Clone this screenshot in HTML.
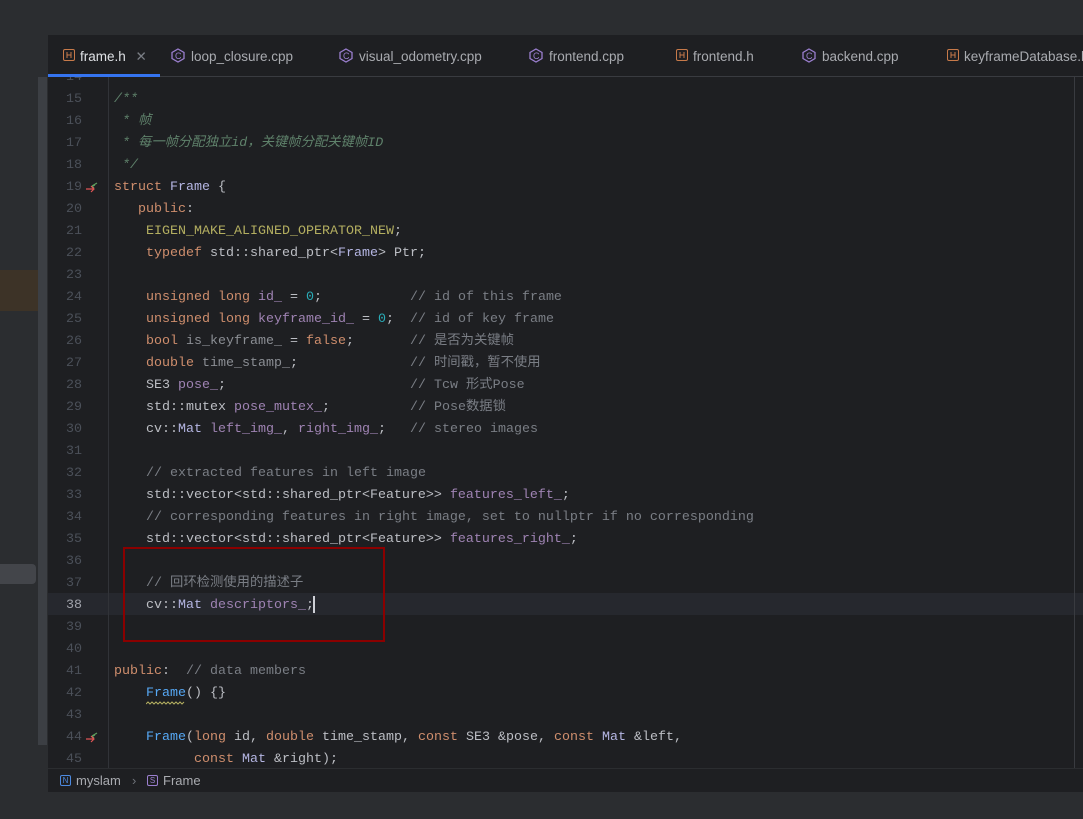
<!DOCTYPE html>
<html><head><meta charset="utf-8"><style>
*{margin:0;padding:0;box-sizing:border-box}
body{width:1083px;height:819px;overflow:hidden;background:#1e1f22;position:relative;font-family:"Liberation Sans","Noto Sans CJK SC",sans-serif}
.top{position:absolute;left:0;top:0;width:1083px;height:35px;background:#2b2d30}
.left{position:absolute;left:0;top:35px;width:48px;height:757px;background:#2b2d30}
.sb{position:absolute;left:38px;top:77px;width:9px;height:668px;background:#3c3f44}
.tabs{position:absolute;left:48px;top:35px;width:1035px;height:42px;background:#1e1f22;border-bottom:1px solid #393b40}
.tab{position:absolute;top:1px;height:42px;line-height:42px;font-size:13.5px;color:#a9abb0;white-space:nowrap}
.tab.act{color:#dfe1e5}
.ic{display:inline-block;vertical-align:middle;margin-right:5px;position:relative;top:-2px}
.code{position:absolute;left:48px;top:77px;width:1035px;height:691px;overflow:hidden}
.ln{position:absolute;left:0;width:34px;text-align:right;font-family:"Liberation Mono",monospace;font-size:13.33px;color:#4b5059}
.l{position:absolute;left:66px;font-family:"Liberation Mono","Noto Sans CJK SC",monospace;font-size:13.33px;color:#bcbec4;white-space:pre;height:22px;line-height:22px}
.ln{height:22px;line-height:22px}
.k{color:#cf8e6d}.c{color:#7a7e85}.d{color:#5f826b;font-style:italic}.m{color:#b3ae60}.f{color:#9f83b3}.u{color:#8b8e94}.n{color:#2aacb8}.fn{color:#56a8f5}.t{color:#bcbec4}.cl{color:#b5b6e3}
.bc{position:absolute;left:48px;top:768px;width:1035px;height:24px;background:#1e1f22;border-top:1px solid #2b2d30;font-size:13px;color:#a9abb0;line-height:24px}
.bot{position:absolute;left:0;top:792px;width:1083px;height:27px;background:#2b2d30}
</style></head><body>
<div class="top"></div>
<div class="left">
 <div style="position:absolute;left:0;top:235px;width:38px;height:41px;background:#3d3327"></div>
 <div style="position:absolute;left:0;top:529px;width:36px;height:20px;background:#43454a;border-radius:0 4px 4px 0"></div>
</div>
<div class="sb"></div>
<div class="tabs">
 <div style="position:absolute;left:0;bottom:-1px;width:112px;height:3px;background:#3574f0"></div>
 <div class="tab act" style="left:15px"><svg class="ic" width="12" height="12"><rect x=".5" y=".5" width="11" height="11" rx="1.5" fill="none" stroke="#c77a4a"/><path d="M4 3v6M8 3v6M4 6h4" stroke="#c77a4a"/></svg>frame.h <span style="color:#7a7e85;margin-left:6px">✕</span></div>
 <div class="tab" style="left:123px"><svg class="ic" width="15" height="15"><path d="M7 1l6 3.5v6L7 14 1 10.5v-6z" fill="none" stroke="#9b7fcf" stroke-width="1.3"/><text x="4" y="11" font-size="9" fill="#9b7fcf" font-family="Liberation Sans">C</text></svg>loop_closure.cpp</div>
 <div class="tab" style="left:291px"><svg class="ic" width="15" height="15"><path d="M7 1l6 3.5v6L7 14 1 10.5v-6z" fill="none" stroke="#9b7fcf" stroke-width="1.3"/><text x="4" y="11" font-size="9" fill="#9b7fcf" font-family="Liberation Sans">C</text></svg>visual_odometry.cpp</div>
 <div class="tab" style="left:481px"><svg class="ic" width="15" height="15"><path d="M7 1l6 3.5v6L7 14 1 10.5v-6z" fill="none" stroke="#9b7fcf" stroke-width="1.3"/><text x="4" y="11" font-size="9" fill="#9b7fcf" font-family="Liberation Sans">C</text></svg>frontend.cpp</div>
 <div class="tab" style="left:628px"><svg class="ic" width="12" height="12"><rect x=".5" y=".5" width="11" height="11" rx="1.5" fill="none" stroke="#c77a4a"/><path d="M4 3v6M8 3v6M4 6h4" stroke="#c77a4a"/></svg>frontend.h</div>
 <div class="tab" style="left:754px"><svg class="ic" width="15" height="15"><path d="M7 1l6 3.5v6L7 14 1 10.5v-6z" fill="none" stroke="#9b7fcf" stroke-width="1.3"/><text x="4" y="11" font-size="9" fill="#9b7fcf" font-family="Liberation Sans">C</text></svg>backend.cpp</div>
 <div class="tab" style="left:899px"><svg class="ic" width="12" height="12"><rect x=".5" y=".5" width="11" height="11" rx="1.5" fill="none" stroke="#c77a4a"/><path d="M4 3v6M8 3v6M4 6h4" stroke="#c77a4a"/></svg>keyframeDatabase.h</div>
</div>
<div class="code">
 <div style="position:absolute;left:0;top:516px;width:1035px;height:22px;background:#26282e"></div>
 <div style="position:absolute;left:60px;top:0;width:1px;height:691px;background:#313338"></div>
 <div style="position:absolute;left:1026px;top:0;width:1px;height:691px;background:#393b40"></div>
 <div style="position:absolute;left:75px;top:470px;width:262px;height:95px;border:2px solid #8b0000"></div>
 <div style="position:absolute;left:265px;top:519px;width:2px;height:17px;background:#ced0d6"></div>
 <svg style="position:absolute;left:37px;top:104px" width="14" height="12"><path d="M12 2L7 5M7 5l3-1M7 5l2 2" stroke="#5fa05f" fill="none" stroke-width="1.2"/><path d="M1 8h8M6 5l3 3-3 3" stroke="#e05555" fill="none" stroke-width="1.2"/></svg>
 <svg style="position:absolute;left:37px;top:654px" width="14" height="12"><path d="M12 2L7 5M7 5l3-1M7 5l2 2" stroke="#5fa05f" fill="none" stroke-width="1.2"/><path d="M1 8h8M6 5l3 3-3 3" stroke="#e05555" fill="none" stroke-width="1.2"/></svg>
 <svg style="position:absolute;left:98px;top:624px" width="40" height="4"><path d="M0 3l2-2 2 2 2-2 2 2 2-2 2 2 2-2 2 2 2-2 2 2 2-2 2 2 2-2 2 2 2-2 2 2 2-2 2 2 2-2" stroke="#b3ae60" fill="none" stroke-width="1"/></svg>
 <div id="c"></div>
</div>
<div class="bc"><span style="position:absolute;left:12px;top:6px;width:11px;height:11px;border:1px solid #4d8ae0;border-radius:2px;font-size:8px;line-height:9px;text-align:center;color:#4d8ae0">N</span><span style="position:absolute;left:28px">myslam</span><span style="position:absolute;left:84px;color:#6f737a">›</span><span style="position:absolute;left:99px;top:6px;width:11px;height:11px;border:1px solid #9b7fcf;border-radius:2px;font-size:8px;line-height:9px;text-align:center;color:#9b7fcf">S</span><span style="position:absolute;left:115px">Frame</span></div>
<div class="bot"></div>
<script>
var L=[
[14,''],
[15,'<span class="d">/**</span>'],
[16,'<span class="d"> * 帧</span>'],
[17,'<span class="d"> * 每一帧分配独立id，关键帧分配关键帧ID</span>'],
[18,'<span class="d"> */</span>'],
[19,'<span class="k">struct</span> <span class="cl">Frame</span> {'],
[20,'   <span class="k">public</span>:'],
[21,'    <span class="m">EIGEN_MAKE_ALIGNED_OPERATOR_NEW</span>;'],
[22,'    <span class="k">typedef</span> std::shared_ptr&lt;<span class="cl">Frame</span>&gt; Ptr;'],
[23,''],
[24,'    <span class="k">unsigned long</span> <span class="f">id_</span> = <span class="n">0</span>;           <span class="c">// id of this frame</span>'],
[25,'    <span class="k">unsigned long</span> <span class="f">keyframe_id_</span> = <span class="n">0</span>;  <span class="c">// id of key frame</span>'],
[26,'    <span class="k">bool</span> <span class="u">is_keyframe_</span> = <span class="k">false</span>;       <span class="c">// 是否为关键帧</span>'],
[27,'    <span class="k">double</span> <span class="u">time_stamp_</span>;              <span class="c">// 时间戳，暂不使用</span>'],
[28,'    SE3 <span class="f">pose_</span>;                       <span class="c">// Tcw 形式Pose</span>'],
[29,'    std::mutex <span class="f">pose_mutex_</span>;          <span class="c">// Pose数据锁</span>'],
[30,'    cv::<span class="cl">Mat</span> <span class="f">left_img_</span>, <span class="f">right_img_</span>;   <span class="c">// stereo images</span>'],
[31,''],
[32,'    <span class="c">// extracted features in left image</span>'],
[33,'    std::vector&lt;std::shared_ptr&lt;Feature&gt;&gt; <span class="f">features_left_</span>;'],
[34,'    <span class="c">// corresponding features in right image, set to nullptr if no corresponding</span>'],
[35,'    std::vector&lt;std::shared_ptr&lt;Feature&gt;&gt; <span class="f">features_right_</span>;'],
[36,''],
[37,'    <span class="c">// 回环检测使用的描述子</span>'],
[38,'    cv::<span class="cl">Mat</span> <span class="f">descriptors_</span>;'],
[39,''],
[40,''],
[41,'<span class="k">public</span>:  <span class="c">// data members</span>'],
[42,'    <span class="fn">Frame</span>() {}'],
[43,''],
[44,'    <span class="fn">Frame</span>(<span class="k">long</span> id, <span class="k">double</span> time_stamp, <span class="k">const</span> SE3 &amp;pose, <span class="k">const</span> <span class="cl">Mat</span> &amp;left,'],
[45,'          <span class="k">const</span> <span class="cl">Mat</span> &amp;right);'],
[46,'']];
var h='';
L.forEach(function(a){var t=12+(a[0]-15)*22;
h+='<div class="ln" style="top:'+t+'px'+(a[0]==38?';color:#a1a3ab':'')+'">'+a[0]+'</div><div class="l" style="top:'+t+'px">'+a[1]+'</div>';});
document.getElementById('c').innerHTML=h;
</script>
</body></html>
